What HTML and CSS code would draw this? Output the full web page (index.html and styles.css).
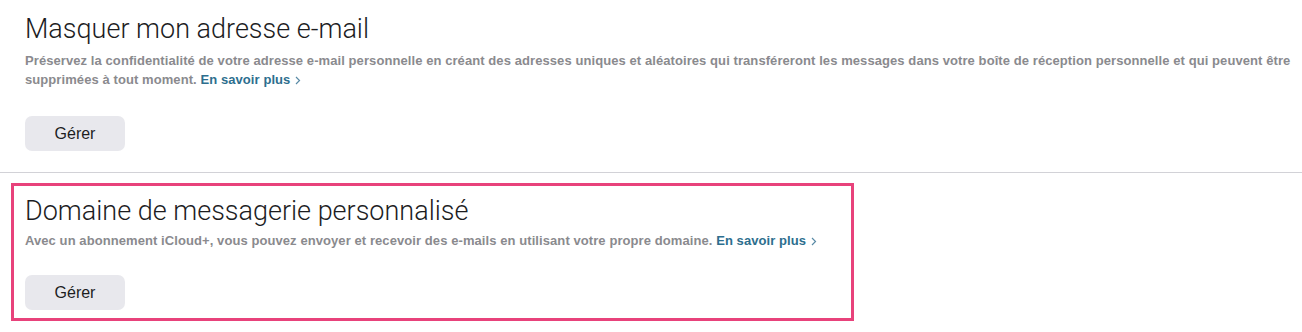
FILE: index.html
```html
<!DOCTYPE html>
<html lang="fr">
<head>
<meta charset="utf-8">
<link rel="stylesheet" href="styles.css">
</head>
<body>
<section class="section first">
  <h2 class="title">Masquer mon adresse e-mail</h2>
  <p class="desc">Préservez la confidentialité de votre adresse e-mail personnelle en créant des adresses uniques et aléatoires qui transféreront les messages dans votre boîte de réception personnelle et qui peuvent être supprimées à tout moment. <a class="more" href="#">En savoir plus<svg class="chev" width="6" height="9" viewBox="0 0 6 9" aria-hidden="true"><polyline points="1,1 4.5,4.5 1,8" fill="none" stroke="currentColor" stroke-width="1.2"/></svg></a></p>
  <button class="btn">Gérer</button>
</section>
<hr class="sep">
<div class="highlight">
  <section class="section second">
    <h2 class="title">Domaine de messagerie personnalisé</h2>
    <p class="desc">Avec un abonnement iCloud+, vous pouvez envoyer et recevoir des e-mails en utilisant votre propre domaine. <a class="more" href="#">En savoir plus<svg class="chev" width="6" height="9" viewBox="0 0 6 9" aria-hidden="true"><polyline points="1,1 4.5,4.5 1,8" fill="none" stroke="currentColor" stroke-width="1.2"/></svg></a></p>
    <button class="btn">Gérer</button>
  </section>
</div>
</body>
</html>
```
FILE: styles.css
```css
html, body {
  margin: 0;
  padding: 0;
  background: #ffffff;
}
body {
  font-family: "Liberation Sans", Arial, sans-serif;
  color: #1d1d1f;
  width: 1302px;
  height: 332px;
  overflow: hidden;
}
.section {
  display: flex;
  flex-direction: column;
  align-items: flex-start;
}
.first {
  padding: 12px 10px 0 25px;
  height: 160px;
  box-sizing: border-box;
}
.title {
  margin: 0;
  font-family: Roboto, "Liberation Sans", sans-serif;
  font-size: 27px;
  font-weight: 300;
  line-height: 34px;
  color: #1d1d1f;
}
.desc {
  margin: 5px 0 0 0;
  font-size: 13px;
  font-weight: 700;
  line-height: 19px;
  letter-spacing: 0.08px;
  color: #8a8a8e;
}
.more {
  color: #2d6e8e;
  text-decoration: none;
}
.chev {
  margin-left: 5px;
  color: #5a8ba6;
  vertical-align: -0.5px;
}
.btn {
  margin-top: 27px;
  width: 100px;
  height: 35px;
  border: none;
  border-radius: 7px;
  background: #e8e8ed;
  font-family: "Liberation Sans", Arial, sans-serif;
  font-size: 16px;
  color: #1d1d1f;
  padding: 0;
}
.sep {
  margin: 12px 0 0 0;
  border: none;
  border-top: 1px solid #d2d2d7;
  height: 0;
}
.highlight {
  margin: 10px 0 0 11px;
  width: 843px;
  height: 138px;
  box-sizing: border-box;
  border: 3px solid #e8427b;
}
.second {
  padding: 8px 0 0 11px;
}
.second .desc {
  margin-top: 3px;
}
.second .btn {
  margin-top: 25px;
}
```
